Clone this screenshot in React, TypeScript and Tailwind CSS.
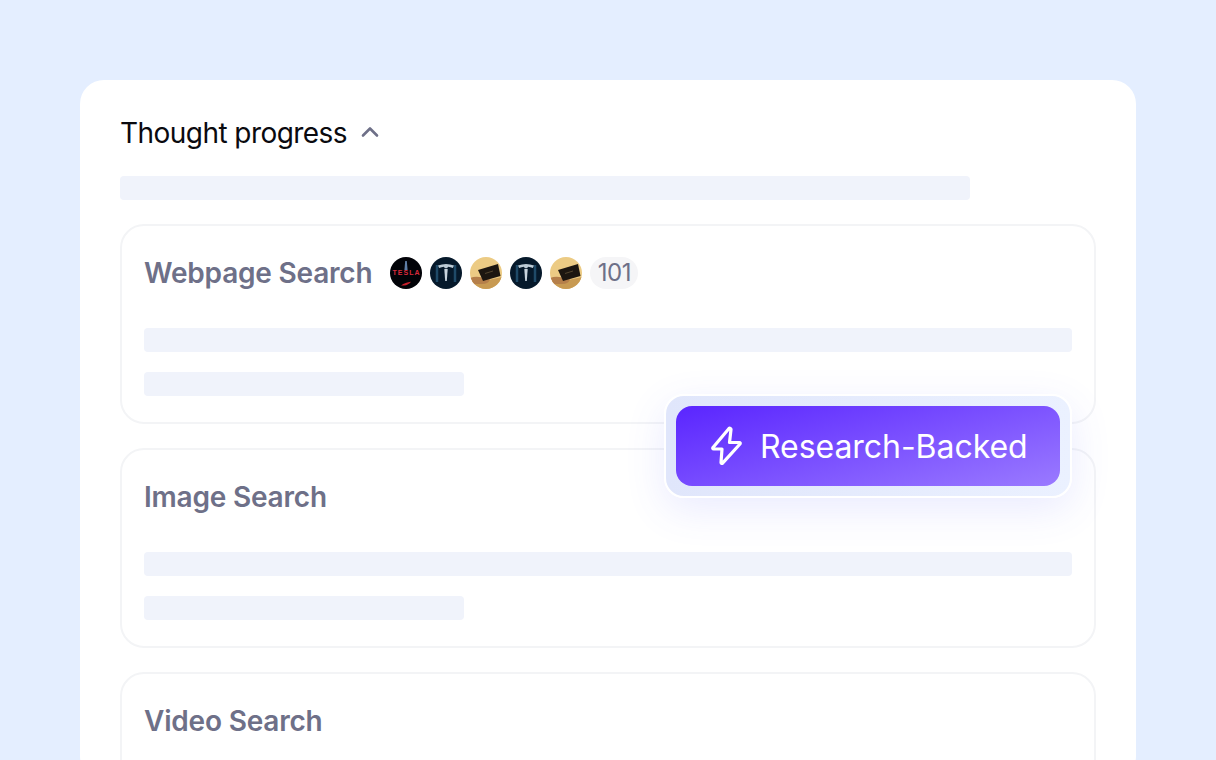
const Bar = ({ className }: { className: string }) => (
  <div className={`h-6 rounded bg-[#f0f3fb] ${className}`} />
);

const TeslaLogo = () => (
  <svg viewBox="0 0 32 32" className="h-8 w-8 rounded-full">
    <rect width="32" height="32" fill="#020308" />
    <path d="M15.200 4h1.600l.8 9h-3.200z" fill="#5f7ea6" />
    <text x="16.500" y="18" textAnchor="middle" fontSize="7" fontWeight="700" letterSpacing="1" fill="#d92a3c" fontFamily="Liberation Sans, sans-serif">
      TESLA
    </text>
    <path d="M11 28.500c3-2.400 6-3.400 10-3.800-1.500 2-4 3.600-7 3.800z" fill="#c9202c" />
  </svg>
);

const TeslaBlue = () => (
  <svg viewBox="0 0 32 32" className="h-8 w-8 rounded-full">
    <rect width="32" height="32" fill="#06192b" />
    <path d="M7 8v17M25 8v17" stroke="#1f4a68" strokeWidth="2.500" />
    <path d="M8 8.500c5.300-2 10.700-2 16 0l-1.200 2.500c-1.600-.8-3.200-1.200-4.800-1.300l-.8 1.500h-2.400l-.8-1.500c-1.600.1-3.200.5-4.800 1.300z" fill="#bccbd6" />
    <path d="M14.300 12h3.400l-.9 12h-1.600z" fill="#c9d5de" />
  </svg>
);

const GoldPhoto = () => (
  <svg viewBox="0 0 32 32" className="h-8 w-8 rounded-full">
    <rect width="32" height="32" fill="#eccb84" />
    <path d="M0 25c6-3 12-3 18-2l14-3v12H0z" fill="#c89a52" />
    <path d="M0 21c4-1.500 8-1.500 12-.5l8 2c-1 3-4 4.500-8 4.500H0z" fill="#b57f4a" />
    <path d="M8 13 28 7 30.500 19 13 24z" fill="#1c1610" />
    <path d="M15 16.500l8-2.500" stroke="#6b5a3c" strokeWidth="0.700" />
  </svg>
);

const SearchCard = ({ title, children }: { title: string; children?: React.ReactNode }) => (
  <div className="h-[200px] shrink-0 rounded-3xl border-2 border-[#f3f4f6] px-[22px] pt-[22px]">
    <div className="flex h-[50px] items-center">
      <span className="text-[28px] leading-none font-semibold tracking-[-0.2px] text-[#6e7088]">{title}</span>
      {children}
    </div>
    <div className="mt-[30px] flex flex-col gap-5">
      <Bar className="w-[928px]" />
      <Bar className="w-[320px]" />
    </div>
  </div>
);

export default function App() {
  return (
    <div className="h-[760px] overflow-hidden bg-[#e4eeff] px-20 pt-20 font-['Inter',sans-serif]">
      <div className="relative h-[700px] rounded-3xl bg-white px-10 pt-9">
        <div className="flex h-[34px] items-center">
          <span className="text-[28px] leading-none tracking-[-0.55px] text-[#0a0a0f]">Thought progress</span>
          <svg viewBox="0 0 24 24" className="ml-[11px] h-6 w-6" fill="none" stroke="#6e7088" strokeWidth="2.600" strokeLinecap="round" strokeLinejoin="round">
            <path d="M5 14.500 12 7.500l7 7" />
          </svg>
        </div>
        <Bar className="mt-[26px] w-[850px]" />
        <div className="mt-6 flex flex-col gap-6">
          <SearchCard title="Webpage Search">
            <div className="ml-[18px] flex items-center gap-2">
              <TeslaLogo />
              <TeslaBlue />
              <GoldPhoto />
              <TeslaBlue />
              <GoldPhoto />
              <span className="flex h-8 w-12 items-center justify-center rounded-full bg-[#f5f5f7] text-[24px] leading-none tracking-[-0.5px] text-[#6e7088]">
                101
              </span>
            </div>
          </SearchCard>
          <SearchCard title="Image Search" />
          <SearchCard title="Video Search" />
        </div>
        <div className="absolute top-[314px] left-[584px] rounded-[20px] border-2 border-white bg-gradient-to-r from-[#e0e6fb] to-[#ebf1ff] p-2.5 shadow-[0_12px_40px_rgba(80,90,255,0.12)]">
          <div className="flex h-20 w-[384px] items-center rounded-2xl bg-[linear-gradient(165deg,#5a25ff,#9a7aff)] pl-[34px]">
            <svg viewBox="0 0 32 40" className="h-10 w-8" fill="none" stroke="#fff" strokeWidth="3.200" strokeLinejoin="round" strokeLinecap="round">
              <path d="M19 2.500 3 21.500c-.5.700-.2 1.500.7 1.500H12l-1 13.500c0 1 1 1.300 1.600.6L30 18c.5-.7.200-1.500-.7-1.500H19.500l1.500-13c.1-1-1.300-1.700-2-1z" />
            </svg>
            <span className="mt-0.5 ml-[18px] text-[32px] leading-none font-normal tracking-[-0.05px] text-white">Research-Backed</span>
          </div>
        </div>
      </div>
    </div>
  );
}
